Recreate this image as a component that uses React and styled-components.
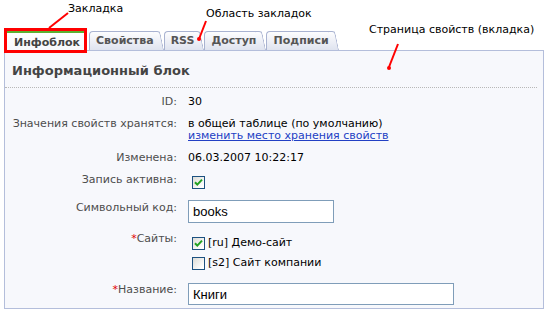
import React from 'react';
import styled, { createGlobalStyle } from 'styled-components';

const GlobalStyle = createGlobalStyle`
  html, body {
    margin: 0;
    padding: 0;
    background: #fff;
  }
`;

const Screen = styled.div`
  position: relative;
  width: 544px;
  height: 309px;
  overflow: hidden;
  font-family: "DejaVu Sans", Verdana, sans-serif;
`;

const Note = styled.div`
  position: absolute;
  left: ${({ x }) => x}px;
  top: ${({ y }) => y}px;
  font-size: 11px;
  line-height: 13px;
  color: #000;
  white-space: nowrap;
  z-index: 3;
`;

const Callouts = styled.svg`
  position: absolute;
  left: 0;
  top: 0;
  z-index: 4;
  pointer-events: none;
`;

const Highlight = styled.div`
  position: absolute;
  left: 4px;
  top: 28px;
  width: 83px;
  height: 25px;
  box-sizing: border-box;
  border: 3px solid #f00;
  z-index: 4;
`;

const TabBar = styled.div`
  display: flex;
  align-items: flex-end;
  height: 21px;
  margin-top: 30px;
  padding-left: 7px;
  position: relative;
  z-index: 2;
`;

const Tab = styled.div`
  position: relative;
  z-index: 0;
  height: 19px;
  margin-bottom: 1px;
  padding: 0 3px 0 7px;
  margin-right: 7px;
  display: flex;
  align-items: center;
  font-size: 11px;
  font-weight: bold;
  color: #555;
  white-space: nowrap;

  &::before {
    content: '';
    position: absolute;
    z-index: -1;
    inset: 0;
    border: 1px solid #a9b3d1;
    border-right: none;
    border-bottom: none;
    border-top-left-radius: 4px;
    background: linear-gradient(#fdfdfe, #dfe3ef);
  }

  &::after {
    content: '';
    position: absolute;
    z-index: -1;
    top: 0;
    bottom: 0;
    right: -3px;
    width: 6px;
    border-top: 1px solid #a9b3d1;
    border-right: 1px solid #a9b3d1;
    border-top-right-radius: 3px;
    background: linear-gradient(#fdfdfe, #dfe3ef);
    transform: skewX(12deg);
    transform-origin: top left;
  }
`;

const ActiveTab = styled.div`
  height: 20px;
  box-sizing: border-box;
  padding: 0 4px 0 7px;
  margin-right: 5px;
  display: flex;
  align-items: center;
  border-top: 2px solid #5bb030;
  background: linear-gradient(#ffffff, #f7f8fc);
  font-size: 11px;
  font-weight: bold;
  color: #444;
  white-space: nowrap;
`;

const Panel = styled.div`
  margin: -1px 0 0 4px;
  width: 540px;
  height: 259px;
  box-sizing: border-box;
  border: 1px solid #b4bedb;
  background: #f7f8fc;
  position: relative;
  z-index: 1;
`;

const Heading = styled.h2`
  margin: 0 6px 0 0;
  padding: 12px 0 8px 7px;
  border-bottom: 1px dotted #b8b8b8;
  font-size: 13px;
  line-height: 16px;
  font-weight: bold;
  color: #444;
`;

const Fields = styled.div`
  display: flex;
  flex-direction: column;
  gap: 10px;
  padding-top: 8px;
`;

const Row = styled.div`
  display: grid;
  grid-template-columns: 172px 1fr;
  column-gap: 11px;
  align-items: start;
  font-size: 11px;
  line-height: 12px;
`;

const Label = styled.div`
  text-align: right;
  color: #4d4d4d;
  white-space: nowrap;
  padding-top: ${({ pt }) => pt || 0}px;
`;

const Required = styled.span`
  color: #e00000;
`;

const Value = styled.div`
  color: #000;
  white-space: nowrap;
`;

const Link = styled.a`
  color: #2240c4;
  text-decoration: underline;
  cursor: pointer;
`;

const TextInput = styled.input`
  display: block;
  width: ${({ w }) => w}px;
  height: ${({ h }) => h}px;
  box-sizing: border-box;
  margin: 0;
  padding: 0 4px;
  border: 1px solid #7f9db9;
  background: #fff;
  font-family: "Liberation Sans", Arial, sans-serif;
  font-size: 13px;
  color: #000;
  outline: none;
`;

const BoxWrap = styled.span`
  display: inline-flex;
  align-items: center;
  justify-content: center;
  width: 13px;
  height: 13px;
  box-sizing: border-box;
  margin-left: 4px;
  border: 1px solid #1c5180;
  background: linear-gradient(135deg, #dcdcd7 0%, #ffffff 85%);
  flex-shrink: 0;
`;

const SiteList = styled.div`
  display: flex;
  flex-direction: column;
`;

const SiteItem = styled.label`
  display: flex;
  align-items: center;
  gap: 3px;
  height: 20px;
  color: #000;
`;

const CheckRow = styled.div`
  padding-top: 2px;
`;

const Checkbox = ({ checked }) => (
  <BoxWrap>
    {checked && (
      <svg width="9" height="9" viewBox="0 0 9 9">
        <path d="M1 4.2 L3.3 6.6 L8 1.6" fill="none" stroke="#21a121" strokeWidth="2" />
      </svg>
    )}
  </BoxWrap>
);

const tabs = ['Свойства', 'RSS', 'Доступ', 'Подписи'];

export default function App() {
  return (
    <Screen>
      <GlobalStyle />
      <Note x={68} y={2}>Закладка</Note>
      <Note x={206} y={7}>Область закладок</Note>
      <Note x={369} y={23}>Страница свойств (вкладка)</Note>
      <Callouts width="544" height="309">
        <line x1="49" y1="28" x2="68" y2="13" stroke="#f00" strokeWidth="2" />
        <line x1="199" y1="39" x2="206" y2="21" stroke="#f00" strokeWidth="2" />
        <circle cx="199" cy="39" r="2" fill="#f00" />
        <line x1="398" y1="44" x2="389" y2="67" stroke="#f00" strokeWidth="2" />
        <circle cx="389" cy="68" r="2" fill="#f00" />
      </Callouts>
      <Highlight />

      <TabBar>
        <ActiveTab>Инфоблок</ActiveTab>
        {tabs.map((t) => (
          <Tab key={t}>{t}</Tab>
        ))}
      </TabBar>

      <Panel>
        <Heading>Информационный блок</Heading>
        <Fields>
          <Row>
            <Label>ID:</Label>
            <Value>30</Value>
          </Row>
          <Row>
            <Label>Значения свойств хранятся:</Label>
            <Value>
              в общей таблице (по умолчанию)
              <br />
              <Link>изменить место хранения свойств</Link>
            </Value>
          </Row>
          <Row>
            <Label>Изменена:</Label>
            <Value>06.03.2007 10:22:17</Value>
          </Row>
          <Row>
            <Label>Запись активна:</Label>
            <CheckRow>
              <Checkbox checked />
            </CheckRow>
          </Row>
          <Row>
            <Label pt={2}>Символьный код:</Label>
            <TextInput w={146} h={23} defaultValue="books" />
          </Row>
          <Row>
            <Label>
              <Required>*</Required>Сайты:
            </Label>
            <SiteList>
              <SiteItem>
                <Checkbox checked />
                [ru] Демо-сайт
              </SiteItem>
              <SiteItem>
                <Checkbox />
                [s2] Сайт компании
              </SiteItem>
            </SiteList>
          </Row>
          <Row>
            <Label pt={1}>
              <Required>*</Required>Название:
            </Label>
            <TextInput w={266} h={22} defaultValue="Книги" />
          </Row>
        </Fields>
      </Panel>
    </Screen>
  );
}
